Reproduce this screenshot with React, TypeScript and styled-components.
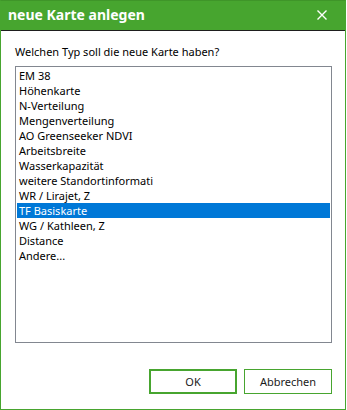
import React, { FC, useState } from 'react';
import styled, { createGlobalStyle } from 'styled-components';

const GREEN = '#47a52f';
const UI_FONT = '"Noto Sans", "Open Sans", "Liberation Sans", sans-serif';

const GlobalStyle = createGlobalStyle`
  html, body {
    margin: 0;
    padding: 0;
    background: #ffffff;
  }
  * {
    box-sizing: border-box;
  }
`;

const Window = styled.div`
  width: 346px;
  height: 410px;
  display: flex;
  flex-direction: column;
  border: 1px solid ${GREEN};
  border-top-color: #3f9529;
  background: #ffffff;
  font-family: ${UI_FONT};
`;

const TitleBar = styled.div`
  height: 30px;
  flex: none;
  display: flex;
  align-items: center;
  justify-content: space-between;
  padding: 0 0 1px 7px;
  background: ${GREEN};
  border-bottom: 1px solid #1e1e1e;
`;

const Title = styled.span`
  color: #ffffff;
  font-size: 14px;
  font-weight: 700;
  line-height: 20px;
`;

const CloseButton = styled.button`
  width: 46px;
  height: 28px;
  display: flex;
  align-items: center;
  justify-content: center;
  border: 0;
  padding: 0;
  background: transparent;
  cursor: pointer;
`;

const Body = styled.div`
  flex: 1;
  display: flex;
  flex-direction: column;
  padding: 13px 13px 15px 14px;
`;

const Prompt = styled.div`
  font-size: 11px;
  line-height: 16px;
  color: #000000;
  margin-bottom: 6px;
`;

const ListBox = styled.ul`
  list-style: none;
  margin: 0;
  height: 277px;
  padding: 1px;
  border: 1px solid #828790;
  overflow: hidden;
`;

const Item = styled.li<{ $selected: boolean }>`
  height: 15px;
  line-height: 15px;
  padding-left: 2px;
  font-size: 11px;
  white-space: nowrap;
  cursor: default;
  color: ${(p) => (p.$selected ? '#ffffff' : '#000000')};
  background: ${(p) => (p.$selected ? '#0078d7' : 'transparent')};
`;

const ButtonRow = styled.div`
  margin-top: auto;
  display: flex;
  justify-content: flex-end;
  gap: 7px;
`;

const Button = styled.button<{ $primary?: boolean }>`
  width: 88px;
  height: 25px;
  padding: 0;
  background: #ffffff;
  border: ${(p) => (p.$primary ? '2px' : '1px')} solid ${GREEN};
  font-family: ${UI_FONT};
  font-size: 11px;
  color: #1a1a1a;
  cursor: pointer;
`;

const items = [
  'EM 38',
  'Höhenkarte',
  'N-Verteilung',
  'Mengenverteilung',
  'AO Greenseeker NDVI',
  'Arbeitsbreite',
  'Wasserkapazität',
  'weitere Standortinformati',
  'WR / Lirajet, Z',
  'TF Basiskarte',
  'WG / Kathleen, Z',
  'Distance',
  'Andere...',
];

const App: FC = () => {
  const [selected, setSelected] = useState(9);

  return (
    <>
      <GlobalStyle />
      <Window>
        <TitleBar>
          <Title>neue Karte anlegen</Title>
          <CloseButton aria-label="Schließen">
            <svg width="10" height="10" viewBox="0 0 10 10">
              <path d="M0.5 0.5 L9.5 9.5 M9.5 0.5 L0.5 9.5" stroke="#ffffff" strokeWidth="1.4" />
            </svg>
          </CloseButton>
        </TitleBar>
        <Body>
          <Prompt>Welchen Typ soll die neue Karte haben?</Prompt>
          <ListBox>
            {items.map((item, i) => (
              <Item key={item} $selected={i === selected} onClick={() => setSelected(i)}>
                {item}
              </Item>
            ))}
          </ListBox>
          <ButtonRow>
            <Button $primary>OK</Button>
            <Button>Abbrechen</Button>
          </ButtonRow>
        </Body>
      </Window>
    </>
  );
};

export default App;
